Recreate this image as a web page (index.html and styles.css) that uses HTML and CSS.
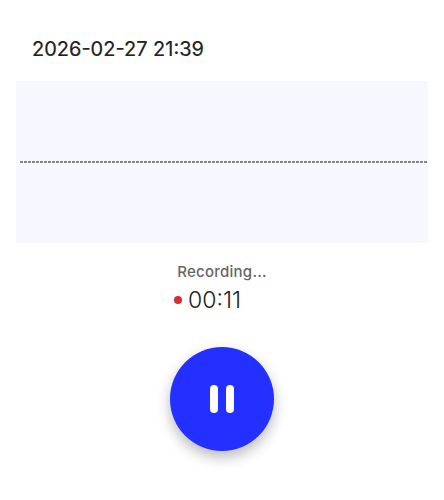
FILE: index.html
```html
<!DOCTYPE html>
<html lang="en">
<head>
  <meta charset="UTF-8">
  <meta name="viewport" content="width=device-width, initial-scale=1">
  <title>Recording</title>
  <link rel="stylesheet" href="styles.css">
</head>
<body>
  <header class="title">2026-02-27 21:39</header>

  <div class="wave">
    <div class="wave-line"></div>
  </div>

  <div class="status">Recording...</div>
  <div class="timer">
    <span class="dot"></span>
    <span>00:11</span>
  </div>

  <div class="controls">
    <button class="pause" aria-label="Pause">
      <span class="bar"></span>
      <span class="bar"></span>
    </button>
  </div>
</body>
</html>
```

FILE: styles.css
```css
/* Base */
html, body {
  height: 100%;
}
body {
  margin: 0;
  overflow: hidden;
  background-color: #fff;
  font-family: 'Inter', sans-serif;
  color: #222;
}
/* Date heading */
.title {
  height: 24px;
  margin: 37px 0 20px;
  padding-left: 32px;
  font-size: 20px;
  line-height: 24px;
  -webkit-text-stroke: 0.2px #222;
}
/* Waveform panel */
.wave {
  display: flex;
  align-items: center;
  height: 162px;
  margin: 0 16px;
  padding: 0 1px 0 4px;
  background-color: #f7f8ff;
}
.wave-line {
  flex: 1;
  height: 2px;
  background-image: repeating-linear-gradient(90deg, #85858d 0, #85858d 3px, transparent 3px, transparent 4px);
}
/* Status */
.status {
  margin-top: 20px;
  font-size: 15px;
  font-weight: 500;
  line-height: 17px;
  letter-spacing: 0.25px;
  text-align: center;
  color: #666;
}
.timer {
  display: flex;
  justify-content: center;
  align-items: center;
  gap: 6px;
  margin-top: 6px;
  padding-right: 29px;
  font-size: 23px;
  font-weight: 300;
  line-height: 28px;
}
.dot {
  width: 8px;
  height: 8px;
  border-radius: 50%;
  background-color: #d92d2d;
}
/* Pause button */
.controls {
  display: flex;
  justify-content: center;
  margin-top: 33px;
}
.pause {
  display: flex;
  justify-content: center;
  align-items: center;
  gap: 8px;
  width: 104px;
  height: 104px;
  padding: 0;
  border: none;
  border-radius: 50%;
  background-color: #2430ff;
  box-shadow: 0 6px 14px rgba(0,0,0,0.28);
}
.bar {
  width: 8px;
  height: 28px;
  border-radius: 4px;
  background-color: #fff;
}
```
